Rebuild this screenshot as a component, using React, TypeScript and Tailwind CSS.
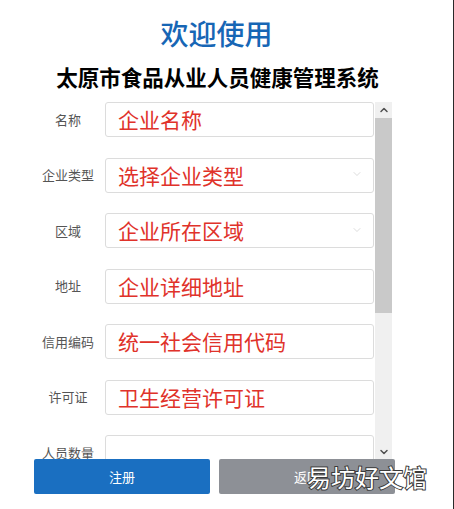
import { ChevronDown, ChevronUp } from "lucide-react";

const fields = [
  { label: "名称", placeholder: "企业名称" },
  { label: "企业类型", placeholder: "选择企业类型", select: true },
  { label: "区域", placeholder: "企业所在区域", select: true },
  { label: "地址", placeholder: "企业详细地址" },
  { label: "信用编码", placeholder: "统一社会信用代码" },
  { label: "许可证", placeholder: "卫生经营许可证" },
  { label: "人员数量", placeholder: "" },
];

export default function App() {
  return (
    <div className="relative w-[454px] h-[509px] overflow-hidden bg-white border-r border-[#2a2a2a] font-['Noto_Sans_CJK_SC','Noto_Sans',sans-serif]">
      <h1 className="mt-[16px] h-[34px] leading-[34px] text-center text-[28px] font-medium text-[#1766b5] pr-[20px]">
        欢迎使用
      </h1>
      <h2 className="mt-[13px] h-[28px] leading-[28px] text-center text-[21.5px] font-bold text-black pr-[18px]">
        太原市食品从业人员健康管理系统
      </h2>

      {/* Form with scroll */}
      <div className="mt-[11px] flex h-[358px] pl-[34px]">
        <div className="w-[340px] overflow-hidden flex flex-col gap-[20.5px]">
          {fields.map((f) => (
            <div key={f.label} className="flex items-center h-[35px] shrink-0">
              <span className="w-[68px] text-center text-[13px] text-[#555]">{f.label}</span>
              <div className="ml-[3px] w-[269px] h-[35px] flex items-center justify-between border border-[#dcdcdc] rounded-[3px] pl-[12px] pr-[10px]">
                <span className="text-[21px] leading-none text-[#e0322a]">{f.placeholder}</span>
                {f.select && <ChevronDown size={12} strokeWidth={1.2} className="text-[#c4c4c4] -mt-[2px]" />}
              </div>
            </div>
          ))}
        </div>
        <div className="ml-[1px] w-[17px] h-full bg-[#f0f0f0] flex flex-col">
          <div className="h-[16px] flex items-center justify-center">
            <ChevronUp size={12} strokeWidth={3} className="text-[#505050]" />
          </div>
          <div className="h-[195px] bg-[#c9c9c9]" />
          <div className="flex-1" />
          <div className="h-[16px] flex items-center justify-center">
            <ChevronDown size={12} strokeWidth={3} className="text-[#505050]" />
          </div>
        </div>
      </div>

      <div className="-mt-[1px] flex gap-[9px] pl-[34px]">
        <button className="w-[176px] h-[35px] rounded-[2px] bg-[#1a6fc1] text-white text-[13px]">注册</button>
        <button className="w-[176px] h-[35px] rounded-[2px] bg-[#8d9096] text-white text-[13px]">返回</button>
      </div>

      {/* Watermark */}
      <div className="absolute left-[307px] top-[460px] text-[24px] leading-[34px] text-white [-webkit-text-stroke:2px_#3a3a3a] [paint-order:stroke_fill]">
        易坊好文馆
      </div>
    </div>
  );
}
